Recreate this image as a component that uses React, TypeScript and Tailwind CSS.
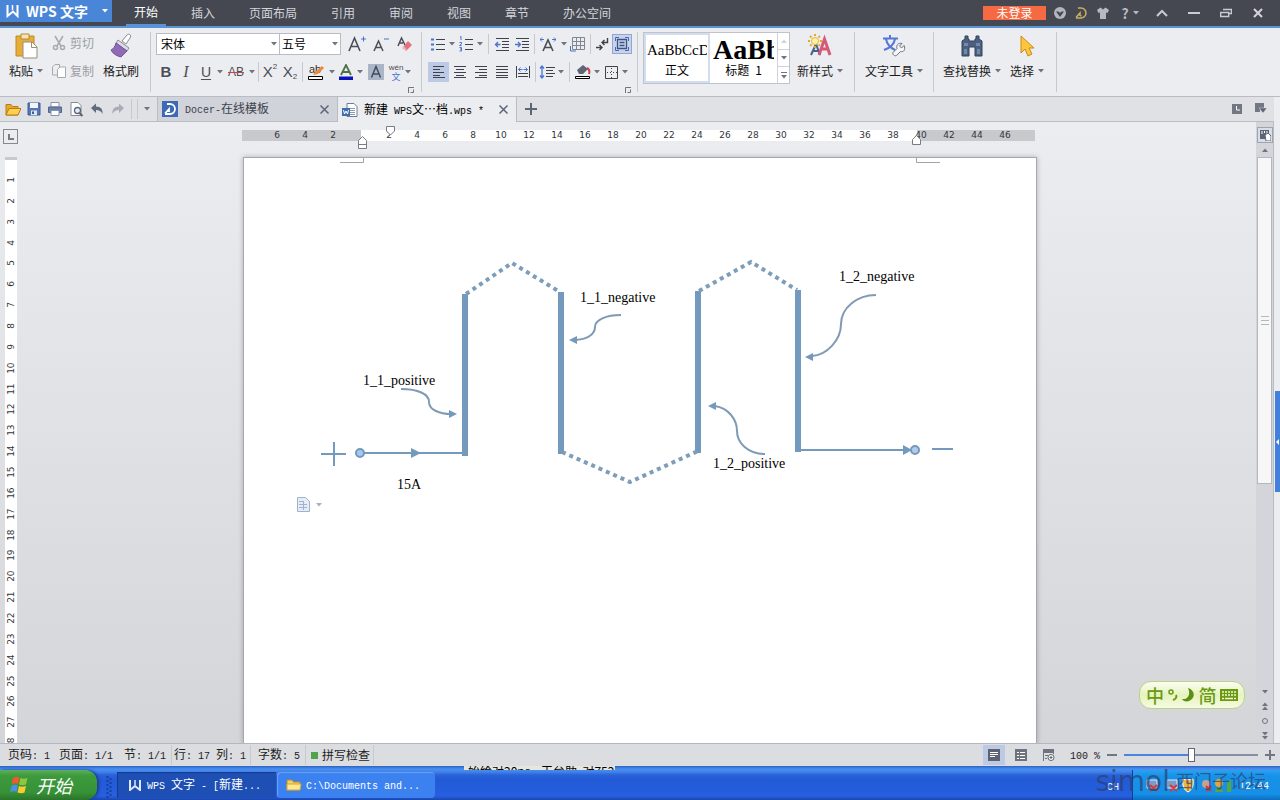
import { ReactNode, useState } from "react"
import clsx from "clsx"

type WithChildren = { children?: ReactNode }

// half-width text of the interface font
const Mono = ({ children }: WithChildren) => (
  <span className="whitespace-pre font-['Liberation_Mono',monospace] text-[10px]">{children}</span>
)

const Icon = ({ w = 16, h = 16, children }: WithChildren & { w?: number, h?: number }) => (
  <svg width={w} height={h} viewBox={`0 0 ${w} ${h}`} fill="none" className="shrink-0" aria-hidden="true">
    {children}
  </svg>
)

const Caret = ({ color = "text-[#6f7480]", className }: { color?: string, className?: string }) => (
  <svg width="6" height="4" viewBox="0 0 6 4" className={clsx("shrink-0", color, className)} aria-hidden="true">
    <path d="M0 0h6L3 3.6z" fill="currentColor" />
  </svg>
)

const Tool = ({ label, className = "w-5", children }: WithChildren & { label: string, className?: string }) => (
  <button aria-label={label} title={label} className={clsx("flex h-5 shrink-0 items-center justify-center hover:bg-[#d5def0]", className)}>
    {children}
  </button>
)

const More = ({ label }: { label: string }) => (
  <Tool label={label} className="w-2"><Caret /></Tool>
)

const Sep = ({ className = "w-1" }: { className?: string }) => (
  <span className={clsx("flex h-5 shrink-0 justify-center", className)}>
    <span className="w-px bg-[#c6c9ce]" />
  </span>
)

const GroupLine = () => <span className="h-[60px] w-px shrink-0 bg-[#c6c9ce]" />

const Launcher = () => (
  <button aria-label="对话框" className="h-2 w-2 shrink-0">
    <Icon w={6} h={6}>
      <path d="M.5 6V.5H6M2.5 5.500h3v-3" stroke="#6f7480" />
    </Icon>
  </button>
)

const BigButton = ({ label, icon, className, arrow = true }: { label: string, icon: ReactNode, className: string, arrow?: boolean }) => (
  <button className={clsx("flex shrink-0 flex-col items-center gap-[2px] text-xs leading-5 text-[#1c1c1c]", className)}>
    <span className="flex h-[26px] items-center">{icon}</span>
    <span className="flex items-center gap-1 whitespace-nowrap">{label}{arrow && <Caret />}</span>
  </button>
)

const menus = [
  { label: "插入", width: "w-[58px]" },
  { label: "页面布局", width: "w-[82px]" },
  { label: "引用", width: "w-[58px]" },
  { label: "审阅", width: "w-[58px]" },
  { label: "视图", width: "w-[58px]" },
  { label: "章节", width: "w-[58px]" },
  { label: "办公空间", width: "w-[82px]" },
]

const TitleBar = () => (
  <header className="flex h-7 shrink-0 border-b-2 border-[#5b94d6] bg-[#454850]">
    <button className="flex h-[22px] w-28 shrink-0 items-center bg-[#4a86d8] pl-[6px] text-sm font-bold text-white">
      <Icon w={14} h={14}>
        <path d="M1.500 1v11L7 7.500l4.500 4.500V1" stroke="#fff" strokeWidth="2" />
        <path d="M6.500 1v5" stroke="#fff" strokeWidth="1.500" />
      </Icon>
      <span className="ml-[6px] whitespace-nowrap">WPS 文字</span>
      <Caret className="ml-auto mr-1" color="text-white" />
    </button>
    <nav className="flex text-xs text-[#d3d6dc]">
      <a href="#start" className="ml-[14px] mr-2 flex w-10 items-center justify-center border-b-2 border-[#5b94d6] text-white">开始</a>
      {menus.map(({ label, width }) => (
        <a key={label} href={`#${label}`} className={clsx("flex items-center justify-center", width)}>{label}</a>
      ))}
    </nav>
    <div className="ml-auto flex items-center pr-[6px] text-[#b6b9c0]">
      <button className="mr-1 h-[14px] w-[63px] bg-[#f56a42] text-xs leading-[14px] text-white">未登录</button>
      <Tool label="云" className="w-5">
        <Icon w={14} h={14}><circle cx="7" cy="7" r="6" fill="#b3b6bd" /><path d="M3 5.500h8L7 11z" fill="#454850" /><path d="M5 4.500h4L7 7z" fill="#b3b6bd" /></Icon>
      </Tool>
      <Tool label="Docer" className="w-[22px]">
        <Icon w={14} h={14}><path d="M4 2h3a5 5 0 0 1 0 10H2M2 11.500 6 7v3M6.500 10h1" stroke="#c9b161" strokeWidth="1.500" /></Icon>
      </Tool>
      <Tool label="皮肤" className="w-[22px]">
        <Icon w={14} h={14}><path d="M4.500 1.500 1 4l1.500 3L4 6.500V13h6V6.500l1.500.5L13 4 9.500 1.500 7 3.500z" fill="#b6b9c0" /></Icon>
      </Tool>
      <Tool label="帮助" className="w-8 gap-1 text-sm font-bold"><span>?</span><Caret color="text-[#b6b9c0]" /></Tool>
      <Tool label="收起" className="w-8"><Icon w={12} h={8}><path d="m1 7 5-5 5 5" stroke="#c9ccd2" strokeWidth="2" /></Icon></Tool>
      <Tool label="最小化" className="w-8"><Icon w={12} h={4}><path d="M0 2h12" stroke="#c9ccd2" strokeWidth="2" /></Icon></Tool>
      <Tool label="还原" className="w-8"><Icon w={12} h={10}><path d="M3 1.500h8.500v4H9M.7 4.500h8v4h-8z" stroke="#c9ccd2" strokeWidth="1.400" /></Icon></Tool>
      <Tool label="关闭" className="w-8"><Icon w={10} h={10}><path d="m1 1 8 8m0-8L1 9" stroke="#d4d6db" strokeWidth="2" /></Icon></Tool>
    </div>
  </header>
)

const ClipboardGroup = () => (
  <div className="flex h-full w-[150px] shrink-0 pl-1 pt-[5px]">
    <BigButton label="粘贴" className="w-[44px]" icon={
      <Icon w={24} h={26}>
        <path d="M2 3h18v20H2z" fill="#e6ad3a" stroke="#c08a1f" />
        <path d="M7 1h8v5H7z" fill="#f8e6b4" stroke="#b08a35" />
        <path d="M9 9h9l5 5v11H9z" fill="#fff" stroke="#9a8e74" /><path d="M17.500 9v5.500H23" stroke="#9a8e74" />
      </Icon>
    } />
    <div className="flex w-[52px] flex-col gap-2 pl-1 text-xs text-[#9b9ea4]">
      <button className="flex h-5 items-center gap-1 whitespace-nowrap">
        <Icon w={14} h={16}><path d="M3 1l6 10M11 1 5 11" stroke="#a6a9af" strokeWidth="1.500" /><circle cx="3.500" cy="12.500" r="2" stroke="#a6a9af" strokeWidth="1.500" /><circle cx="10.500" cy="12.500" r="2" stroke="#a6a9af" strokeWidth="1.500" /></Icon>
        剪切
      </button>
      <button className="flex h-5 items-center gap-1 whitespace-nowrap">
        <Icon w={14} h={16}><path d="M5 12H.5V4L3 1.500h4.500V4" stroke="#a6a9af" /><path d="M5.500 6.500 8 4h5.500v10.500h-8z" fill="#fff" stroke="#a6a9af" /></Icon>
        复制
      </button>
    </div>
    <BigButton label="格式刷" arrow={false} className="w-[42px]" icon={
      <Icon w={24} h={26}>
        <path d="m13 8 5-6c2-2 5 0 3 3l-4 6z" fill="#fff" stroke="#8a8a99" />
        <path d="m9 7 11 8-2 3L7 10z" fill="#dddde8" stroke="#8a8a99" />
        <path d="m7 10 11 8-6 6c-4-1-8-3-10-7 2-1 4-3 5-7z" fill="#8f6bb5" stroke="#75519e" />
      </Icon>
    } />
  </div>
)

const FontGroup = () => (
  <div className="flex h-full w-[270px] shrink-0 flex-col pl-[5px] pt-[5px] text-[#4b4e56]">
    <div className="flex h-[22px] items-center">
      <div className="relative flex h-[22px] w-[124px] border border-[#b9bcc3] bg-white">
        <select aria-label="字体" className="w-full appearance-none bg-transparent pl-1 text-xs text-black outline-none"><option>宋体</option></select>
        <span className="pointer-events-none absolute right-0 top-2 w-2"><Caret /></span>
      </div>
      <div className="relative flex h-[22px] w-[61px] border border-l-0 border-[#b9bcc3] bg-white">
        <select aria-label="字号" className="w-full appearance-none bg-transparent pl-[2px] text-xs text-black outline-none"><option>五号</option></select>
        <span className="pointer-events-none absolute right-0 top-2 w-2"><Caret /></span>
      </div>
      <Tool label="增大字号" className="ml-1 w-6">
        <Icon w={18} h={18}><path d="m1 16 5.500-13L12 16M3 11.500h7" stroke="#4b4e56" strokeWidth="1.600" /><path d="M13 4h5M15.500 1.500v5" stroke="#4a72cf" /></Icon>
      </Tool>
      <Tool label="减小字号" className="w-6">
        <Icon w={18} h={18}><path d="m2 16 4.500-10L11 16M4 12.500h5" stroke="#4b4e56" strokeWidth="1.500" /><path d="M12 4h5" stroke="#4a72cf" /></Icon>
      </Tool>
      <Tool label="清除格式" className="w-6">
        <Icon w={16} h={16}><path d="m1 10 3.500-8L8 9M2 7h4" stroke="#4b4e56" strokeWidth="1.500" /><path d="m6 11 5-6 4 4-6 6z" fill="#e4717c" /><path d="m5 12 2-2 3 4-1 1z" fill="#f4b2b8" /></Icon>
      </Tool>
    </div>
    <div className="mt-[7px] flex items-center font-['Liberation_Sans',sans-serif] text-[15px] leading-5">
      <Tool label="加粗"><b>B</b></Tool>
      <Tool label="倾斜"><i className="font-['Liberation_Serif',serif] text-base">I</i></Tool>
      <Tool label="下划线"><u className="text-sm underline-offset-2">U</u></Tool>
      <More label="下划线类型" />
      <Tool label="删除线" className="w-6"><s className="text-xs decoration-[#c9434b]">AB</s></Tool>
      <More label="删除线类型" />
      <Sep />
      <Tool label="上标"><span>X</span><span className="self-start text-[8px] leading-[10px]">2</span></Tool>
      <Tool label="下标"><span>X</span><span className="self-end text-[8px] leading-[10px]">2</span></Tool>
      <Sep />
      <Tool label="突出显示" className="w-6">
        <Icon w={16} h={16}><text x="1" y="9" fontSize="11" fill="#333">ab</text><path d="m5 11 2-3 7-6 2 2-6 6z" fill="#ee8a35" /><path d="M.5 12.500h14v3H.5z" fill="#fff" stroke="#000" /></Icon>
      </Tool>
      <More label="突出显示颜色" />
      <Tool label="字体颜色">
        <Icon w={16} h={16}><path d="M3 11 8 1l5 10M5 8h6" stroke="#4e7245" strokeWidth="1.800" /><path d="M1 12.500h14V16H1z" fill="#0a14b8" /></Icon>
      </Tool>
      <More label="字体颜色" />
      <Tool label="字符底纹" className="w-6">
        <Icon w={16} h={16}><path d="M0 0h16v16H0z" fill="#a9b6ca" /><path d="m3.500 13.500 4.500-11 4.500 11M5 10h6" stroke="#454b58" strokeWidth="1.500" /></Icon>
      </Tool>
      <Tool label="拼音指南" className="w-4">
        <span className="flex flex-col items-center text-[9px] leading-[9px]">
          <span className="text-[8px]">wén</span>
          <span className="font-['Noto_Sans_CJK_SC',sans-serif] text-[#4a72cf]">文</span>
        </span>
      </Tool>
      <More label="拼音指南选项" />
    </div>
    <div className="mt-1 flex justify-end pr-[5px]"><Launcher /></div>
  </div>
)

const Lines = ({ x, color = "#3f424a" }: { x: number[][], color?: string }) => (
  <path d={x.map(([from, to, y]) => `M${from} ${y + 0.5}H${to}`).join("")} stroke={color} />
)

const ParagraphGroup = () => (
  <div className="flex h-full w-[215px] shrink-0 flex-col pl-[6px] pt-[6px]">
    <div className="flex items-center">
      <Tool label="项目符号"><Icon><Lines x={[[6, 15, 3], [6, 15, 8], [6, 15, 13]]} /><path d="M1 2.500h3v2H1zM1 7.500h3v2H1zM1 12.500h3v2H1z" fill="#4a72cf" /></Icon></Tool>
      <More label="项目符号库" />
      <Tool label="编号"><Icon><Lines x={[[7, 15, 3], [7, 15, 8], [7, 15, 13]]} /><path d="M2 1l1-.5V4M1.500 6.500h2v1.500l-2 1.500h2M1.500 11.500h2v3.500h-2M2 13h1.500" stroke="#4a72cf" /></Icon></Tool>
      <More label="编号库" />
      <Sep className="w-2" />
      <Tool label="减少缩进"><Icon><Lines x={[[2, 15, 2], [8, 15, 5], [8, 15, 8], [8, 15, 11], [2, 15, 14]]} /><path d="M6.500 8.500H2M4 6 1.500 8.500 4 11" stroke="#4a72cf" strokeWidth="1.300" /></Icon></Tool>
      <Tool label="增加缩进"><Icon><Lines x={[[2, 15, 2], [8, 15, 5], [8, 15, 8], [8, 15, 11], [2, 15, 14]]} /><path d="M1 8.500h5M4 6l2.500 2.500L4 11" stroke="#4a72cf" strokeWidth="1.300" /></Icon></Tool>
      <Sep />
      <Tool label="字符缩放" className="w-6"><Icon><path d="m3 15 5-11 5 11M5 11.500h6" stroke="#4b4e56" strokeWidth="1.600" /><path d="M0 3.500h4M2 1.500l-2 2 2 2M12 3.500h4m-2-2 2 2-2 2" stroke="#4a72cf" /></Icon></Tool>
      <More label="缩放选项" />
      <Tool label="网格"><Icon><path d="M2.500 1.500h12v12h-12zM2.500 5.500h12M2.500 9.500h12M6.500 1.500v12M10.500 1.500v12" stroke="#7f8694" /><path d="M.5 10v5H6" stroke="#4a72cf" /></Icon></Tool>
      <Sep />
      <Tool label="换行符"><Icon><path d="M13.500 2v4.500H8M10.500 4 8 6.500 10.500 9" stroke="#3f424a" strokeWidth="1.400" /><path d="M2 11.500h6M5.500 9 8 11.500 5.500 14" stroke="#3f424a" strokeWidth="1.400" /></Icon></Tool>
      <Tool label="段落布局" className="w-5 border border-[#8fa8d3] bg-[#c6d3ea]"><Icon><path d="M1.500 5V1.500H5M11 1.500h3.500V5M14.500 11v3.500H11M5 14.500H1.500V11" stroke="#4a66a8" /><path d="M3.500 3.500h9v9h-9zM5.500 6.500h5M5.500 9.500h5" stroke="#3c5288" strokeWidth="1.300" /></Icon></Tool>
    </div>
    <div className="mt-2 flex items-center">
      <Tool label="左对齐" className="w-[21px] bg-[#bccae6]"><Icon><Lines x={[[2, 13, 2], [2, 9, 5], [2, 13, 8], [2, 9, 11], [2, 14, 13]]} /></Icon></Tool>
      <Tool label="居中" className="w-[21px]"><Icon><Lines x={[[2, 14, 2], [4, 12, 5], [2, 14, 8], [4, 12, 11], [2, 14, 13]]} /></Icon></Tool>
      <Tool label="右对齐" className="w-[21px]"><Icon><Lines x={[[2, 14, 2], [6, 14, 5], [2, 14, 8], [6, 14, 11], [2, 14, 13]]} /></Icon></Tool>
      <Tool label="两端对齐" className="w-[21px]"><Icon><Lines x={[[2, 14, 2], [2, 14, 5], [2, 14, 8], [2, 14, 11], [2, 14, 13]]} /></Icon></Tool>
      <Tool label="分散对齐" className="w-[21px]"><Icon><path d="M1.500 2v12M14.500 2v12" stroke="#3f424a" /><path d="M3.500 5.500h4M5.500 3.500l-2 2 2 2M8.500 5.500h4m-2-2 2 2-2 2" stroke="#4a72cf" /><Lines x={[[3, 13, 9], [3, 13, 12]]} /></Icon></Tool>
      <Sep />
      <Tool label="行距"><Icon><Lines x={[[7, 16, 3], [7, 14, 6], [7, 16, 9], [7, 14, 12]]} /><path d="M3 2v12M1 4.500 3 2l2 2.500M1 11.500 3 14l2-2.500" stroke="#4a72cf" strokeWidth="1.300" /></Icon></Tool>
      <More label="行距选项" />
      <Sep className="w-2" />
      <Tool label="底纹"><Icon><path d="m2 6 6-5 5 4-5 5H4z" fill="#5e6673" /><path d="M12 4c2 1 3 3 2 6" stroke="#cc4450" strokeWidth="2" /><path d="M.5 12.500h14v2H.5z" fill="#fff" stroke="#000" /></Icon></Tool>
      <More label="底纹颜色" />
      <Tool label="边框"><Icon><path d="M2.500 2.500h12v12h-12z" stroke="#3f424a" /><path d="M8.500 4v10M4 8.500h10" stroke="#3f424a" strokeDasharray="1 2" /></Icon></Tool>
      <More label="边框类型" />
    </div>
    <div className="mt-1 flex justify-end pr-1"><Launcher /></div>
  </div>
)

const StylesGroup = () => (
  <div className="flex h-full w-[216px] shrink-0 pl-[5px] pt-1">
    <div className="flex h-[52px] w-[147px] border border-[#bfc3ca] bg-white">
      <button className="flex h-[50px] w-[66px] flex-col items-center overflow-hidden border-2 border-[#d3ddf0] px-px pt-[3px]">
        <span className="w-full overflow-hidden whitespace-nowrap text-left font-['Liberation_Serif',serif] text-[15px] leading-6 text-black">AaBbCcDd</span>
        <span className="text-xs leading-4">正文</span>
      </button>
      <button className="flex h-[50px] w-[67px] flex-col items-center overflow-hidden px-[3px] pt-[5px]">
        <span className="w-full overflow-hidden whitespace-nowrap text-left font-['Liberation_Serif',serif] text-[28px] font-bold leading-6 text-black">AaBb</span>
        <span className="text-xs leading-4">标题<Mono> </Mono>1</span>
      </button>
      <div className="flex w-3 flex-col divide-y divide-[#cfd2d8] border-l border-[#cfd2d8]">
        <button aria-label="上一行" className="flex flex-1 items-center justify-center"><Caret className="rotate-180" color="text-[#d0d3d8]" /></button>
        <button aria-label="下一行" className="flex flex-1 items-center justify-center"><Caret /></button>
        <button aria-label="更多样式" className="flex flex-1 flex-col items-center justify-center gap-[2px]"><span className="h-px w-[6px] bg-[#6f7480]" /><Caret /></button>
      </div>
    </div>
    <div className="flex flex-1 flex-col items-end pr-1 pt-px">
      <BigButton label="新样式" className="w-[60px]" icon={
        <Icon w={24} h={24}>
          <path d="m3 21 5-11 4 11M5 17h6" stroke="#44618f" strokeWidth="2" />
          <path d="m11 21 5.500-16L22 21M13 15h7" stroke="#d45a77" strokeWidth="3" />
          <path d="M7 0v14M0 7h14M2 2l10 10M12 2 2 12" stroke="#e2a834" strokeWidth="2" strokeDasharray="2 1" />
          <circle cx="7" cy="7" r="3.500" fill="#fff0a8" stroke="#e8bd45" />
        </Icon>
      } />
      <div className="mt-[6px]"><Launcher /></div>
    </div>
  </div>
)

const Ribbon = () => (
  <section className="flex h-[69px] shrink-0 items-center overflow-hidden border-b border-[#b9bcc3] bg-[#ebedf0]">
    <ClipboardGroup /><GroupLine />
    <FontGroup /><GroupLine />
    <ParagraphGroup /><GroupLine />
    <StylesGroup /><GroupLine />
    <div className="flex h-full w-[78px] shrink-0 justify-center pt-[5px]">
      <BigButton label="文字工具" className="w-[72px]" icon={
        <Icon w={24} h={24}>
          <path d="M1 4.500h15M8 1v3M4 5c1 6 5 9 9 11M13 5c-1 6-5 9-11 11" stroke="#5577d6" strokeWidth="2" />
          <path d="M22 11.500 19.500 14l-2-2L20 9.500c-4-1-6 2-5 5l-4 4c-1 2 2 4 3.500 3l4-4c3 1 5.500-2 3.500-6z" fill="#f4f5f7" stroke="#6b6e76" />
        </Icon>
      } />
    </div>
    <GroupLine />
    <div className="flex h-full w-[122px] shrink-0 pl-[5px] pt-[5px]">
      <BigButton label="查找替换" className="w-[66px]" icon={
        <Icon w={22} h={22}>
          <path d="M4 4V1h3v3h1v2h6V4h1V1h3v3l3 2v15h-7v-9H8v9H1V6z" fill="#4c607f" stroke="#33435c" />
          <path d="M3 8h4v3H3zM15 8h4v3h-4zM3 14h3v5H3zM16 14h3v5h-3z" fill="#7289ac" />
        </Icon>
      } />
      <BigButton label="选择" className="w-[44px]" icon={
        <Icon w={16} h={22}><path d="M2 1v17l4-4 3 7 4-2-3-6h5z" fill="#ffc63c" stroke="#c98a1d" /></Icon>
      } />
    </div>
    <GroupLine />
  </section>
)

const CloseX = ({ label }: { label: string }) => (
  <button aria-label={label} className="ml-auto mr-2 shrink-0">
    <Icon w={9} h={9}><path d="m.5.5 8 8m0-8-8 8" stroke="#5d6678" strokeWidth="1.500" /></Icon>
  </button>
)

const TabBar = () => (
  <div className="flex h-[25px] shrink-0 border-b border-[#b9bcc3] bg-[#dfe1e5]">
    <div className="flex w-[157px] shrink-0 items-center pl-[2px]">
      <Tool label="打开" className="w-[21px]"><Icon><path d="M1 3.500h5l1.500 2H13V14H1z" fill="#e7a92b" stroke="#b67d14" /><path d="M4 7.500h12L13 14H1z" fill="#ffd04d" stroke="#b67d14" /></Icon></Tool>
      <Tool label="保存" className="w-[21px]"><Icon><path d="M2 2h12v12H2z" fill="#5577b4" stroke="#3c5c98" /><path d="M4 2h8v5H4z" fill="#f2f5fa" /><path d="M5 9.500h6V14H5z" fill="#dfe5f0" /><path d="M6 10.500h2V13H6z" fill="#3c5c98" /></Icon></Tool>
      <Tool label="打印" className="w-[21px]"><Icon><path d="M4 1.500h8V6H4z" fill="#fff" stroke="#8794ad" /><path d="M1.500 6h13v5.500h-13z" fill="#6e82a8" stroke="#526892" /><path d="M4 9.500h8v5H4z" fill="#fff" stroke="#8794ad" /></Icon></Tool>
      <Tool label="打印预览" className="w-[21px]"><Icon><path d="M3 1.500h7l3 3v10H3z" fill="#fff" stroke="#868b95" /><circle cx="9.500" cy="9.500" r="3" fill="#e4ecf8" stroke="#5c6678" strokeWidth="1.300" /><path d="m11.500 12 3 3" stroke="#5c6678" strokeWidth="2" /></Icon></Tool>
      <Tool label="撤消" className="w-[21px]"><Icon><path d="M2 7 7 2.500v3c5 0 7 3 6.500 7.500C12 10 10 9 7 9v3z" fill="#626c80" /></Icon></Tool>
      <Tool label="恢复" className="w-[21px]"><Icon><path d="M14 7 9 2.500v3c-5 0-7 3-6.500 7.500C4 10 6 9 9 9v3z" fill="#a9adb5" /></Icon></Tool>
      <Sep className="w-[6px]" /><Sep className="w-[6px]" />
      <Tool label="自定义" className="w-[14px]"><Caret /></Tool>
    </div>
    <div className="flex w-[181px] shrink-0 items-center border-x border-[#b9bcc3] bg-[#d0d3da] pl-1 text-xs text-[#3f424a]">
      <Icon><path d="M0 0h16v16H0z" fill="#3f69b5" /><path d="M5 3h3a5 5 0 0 1 0 10H3M3 12.500 7 8v3" stroke="#fff" strokeWidth="1.800" /></Icon>
      <span className="ml-[7px] whitespace-nowrap"><Mono>Docer-</Mono>在线模板</span>
      <CloseX label="关闭 Docer" />
    </div>
    <div className="-mb-px flex w-[179px] shrink-0 items-center border-r border-[#b9bcc3] bg-[#ebedf0] pl-1 text-xs text-black">
      <Icon><path d="M5 1.500h7l3 3v10H5z" fill="#fff" stroke="#6e7d96" /><path d="M7 6.500h6M7 8.500h6M7 10.500h6M7 12.500h6" stroke="#8b99b0" /><path d="M0 6h8v8H0z" fill="#3f6cab" /><path d="m1.500 8 1 4L4 9l1.500 3 1-4" stroke="#fff" /></Icon>
      <span className="ml-[6px] whitespace-nowrap">新建<Mono> WPS</Mono>文…档<Mono>.wps *</Mono></span>
      <CloseX label="关闭文档" />
    </div>
    <button aria-label="新建标签" className="flex w-7 items-center justify-center">
      <Icon w={12} h={12}><path d="M6 0v12M0 6h12" stroke="#5d6678" strokeWidth="2" /></Icon>
    </button>
    <div className="ml-auto flex items-center gap-1 pr-[3px]">
      <Tool label="历史"><Icon w={10} h={10}><path d="M0 0h10v10H0z" fill="#737783" /><path d="M4.500 2v4H8" stroke="#fff" /></Icon></Tool>
      <Tool label="标签列表"><Icon w={12} h={12}><path d="M0 0h9v5H5v4H0z" fill="#737783" /><path d="M4 5h8l-4 5z" fill="#5d6170" stroke="#dfe1e5" strokeWidth=".5" /></Icon></Tool>
    </div>
  </div>
)

// -6 ... 46 in steps of two characters, the zero mark stays blank
const rulerMarks = Array.from({ length: 27 }, (_, i) => (i - 3) * 2)
const sideMarks = Array.from({ length: 28 }, (_, i) => i + 1)

const HorizontalRuler = () => (
  <div className="relative flex h-[11px] w-[796px] shrink-0 bg-[linear-gradient(90deg,#c8c9cd_119px,#fff_119px,#fff_675px,#c8c9cd_675px,#c8c9cd_793px,transparent_793px)] pl-[21px] font-['DejaVu_Sans',sans-serif] text-[9px] leading-[11px] text-[#33353a]">
    {rulerMarks.map((n) => (
      <span key={n} className="w-7 shrink-0 text-center">{n === 0 ? "" : Math.abs(n)}</span>
    ))}
    <svg width="9" height="10" viewBox="0 0 9 10" className="absolute -top-[4px] left-[144px]" aria-hidden="true"><path d="M.5.5h8V5l-4 4-4-4z" fill="#fff" stroke="#777b84" /></svg>
    <svg width="9" height="13" viewBox="0 0 9 13" className="absolute left-[116px] top-[6px]" aria-hidden="true"><path d="M.5 12.500V4.500l4-4 4 4v8zM.5 8.500h8" fill="#fff" stroke="#777b84" /></svg>
    <svg width="9" height="10" viewBox="0 0 9 10" className="absolute left-[670px] top-[5px]" aria-hidden="true"><path d="M.5 9.500v-5l4-4 4 4v5z" fill="#fff" stroke="#777b84" /></svg>
  </div>
)

const Circuit = () => (
  <svg width="792" height="400" viewBox="0 0 792 400" fill="none" stroke="#7399bc" role="img" aria-label="15A">
    <path d="M96 4.500h23.500V0M696 4.500h-23.500V0" stroke="#a0a4ab" />
    <path d="M221 136v162M317 134v162M454 133v162M554 132v162" strokeWidth="6" />
    <path d="M222 136 268 105l48 29M455 133l52-29 46 28M318 294l68 30 68-31" strokeWidth="4" strokeDasharray="4 4" stroke="#7d9dbb" />
    <path d="M77 296h25M90 284v24M116 295h103M556 292h106M688 291h21" strokeWidth="2" />
    <path d="M167 290v10l10-5zM659 287v10l9-5z" fill="#7399bc" stroke="none" />
    <circle cx="116" cy="295" r="4" fill="#a6c8ee" strokeWidth="2" />
    <circle cx="671" cy="292" r="4" fill="#b4cbe8" strokeWidth="2" />
    <g stroke="#7f9ab5" strokeWidth="2">
      <path d="M157 231c17 0 28 5 28 13s11 12 22 12" />
      <path d="M377 157c-15 0-26 5-26 12s-7 12-19 13" />
      <path d="M632 137c-19 0-35 13-35 29s-14 31-29 32" />
      <path d="M521 296c-17 0-28-11-28-23s-9-23-22-25" />
    </g>
    <path d="M213 256l-8-4v8zM325 182l8-4v8zM561 199l8-4v8zM464 248l8-4v8z" fill="#7399bc" stroke="none" />
    <g stroke="none" fill="#000" className="font-['Liberation_Serif',serif] text-sm">
      <text x="119" y="227">1_1_positive</text>
      <text x="336" y="144">1_1_negative</text>
      <text x="595" y="123">1_2_negative</text>
      <text x="469" y="310">1_2_positive</text>
      <text x="153" y="331">15A</text>
    </g>
    <path d="M53.500 339.500h8l4 4v10h-12z" fill="#e4edf7" stroke="#9fb3cc" />
    <path d="M55 343.500h5M55 346.500h8M55 349.500h8M59.500 344v8" stroke="#9fb3cc" />
    <path d="M72 345h6l-3 3.500z" fill="#a9b1bf" stroke="none" />
  </svg>
)

const VerticalRuler = () => (
  <div className="flex w-6 shrink-0 flex-col pl-1 pt-[7px]">
    <button aria-label="制表位" className="-ml-px flex h-[15px] w-[15px] shrink-0 items-center justify-center border border-[#85888f]">
      <Icon w={6} h={6}><path d="M1 0v5h5" stroke="#777b84" strokeWidth="2" /></Icon>
    </button>
    <div className="ml-px mt-[13px] h-[3px] w-3 shrink-0 bg-[#c8c9cd]" />
    <div className="ml-px flex h-[594px] w-3 shrink-0 flex-col bg-white pt-[10px] font-['DejaVu_Sans',sans-serif] text-[9px] leading-3 text-[#33353a]">
      {sideMarks.map((n) => (
        <span key={n} className="flex w-3 flex-1 rotate-180 items-center justify-center [writing-mode:vertical-rl]">{n}</span>
      ))}
    </div>
  </div>
)

const ScrollBar = () => (
  <div className="flex w-[18px] shrink-0 flex-col items-center border-r border-[#b9bcc3] bg-[#d3d5da] pt-[5px]">
    <button aria-label="标尺" className="flex h-4 w-4 shrink-0 items-center justify-center border border-[#9fa3ab] bg-[#d6deeb]">
      <Icon w={12} h={12}><path d="M1 1h9v9H1z" fill="#5f6472" /><path d="M3 2v3M5.500 2v2M8 2v3" stroke="#fff" /><path d="m6 6 3-2 3 3v5H7z" fill="#fff" stroke="#5f6472" /></Icon>
    </button>
    <button aria-label="向上" className="flex h-[14px] shrink-0 items-center"><Caret className="rotate-180" /></button>
    <div className="flex h-[327px] w-[15px] shrink-0 flex-col items-center justify-center gap-[3px] border border-[#b4b7be] bg-[#f7f7f8]">
      <span className="h-px w-2 bg-[#b4b7be]" /><span className="h-px w-2 bg-[#b4b7be]" /><span className="h-px w-2 bg-[#b4b7be]" />
    </div>
    <div className="mt-auto flex flex-col items-center">
      <button aria-label="向下" className="flex h-[14px] items-center"><Caret /></button>
      <button aria-label="上一页" className="flex h-[14px] flex-col items-center justify-center"><Caret className="rotate-180" /><Caret className="rotate-180" /></button>
      <button aria-label="选择浏览对象" className="flex h-[15px] items-center"><span className="h-[6px] w-[6px] rounded-full border border-[#6f7480]" /></button>
      <button aria-label="下一页" className="flex h-[15px] flex-col items-center justify-center"><Caret /><Caret /></button>
    </div>
  </div>
)

const Workspace = () => (
  <main className="flex min-h-0 flex-1 overflow-hidden bg-gradient-to-b from-[#ebedf0] to-[#d4d5d9]">
    <VerticalRuler />
    <div className="flex min-w-0 flex-1 flex-col items-center pt-2">
      <HorizontalRuler />
      <div className="mt-4 w-[794px] flex-1 border border-b-0 border-[#a6a8ad] bg-white shadow-[0_0_5px_rgba(0,0,0,0.25)]">
        <Circuit />
      </div>
    </div>
    <ScrollBar />
  </main>
)

const InputMethodBar = () => (
  <div className="absolute bottom-[91px] right-[35px] flex h-7 w-[106px] items-center justify-between rounded-xl border border-[#b9d48a] bg-gradient-to-b from-[#fbfdf0] via-[#e6f3bd] to-[#f5fbe2] px-[6px] text-lg font-medium leading-none text-[#6a9a12]">
    <span>中</span>
    <Icon w={10} h={14}><circle cx="3" cy="4" r="2" stroke="#6a9a12" strokeWidth="1.500" /><path d="M8 7c1 2 0 4-3 5" stroke="#6a9a12" strokeWidth="2" /></Icon>
    <Icon w={14} h={16}><path d="M7 1c7 2 8 10 1 13-3 1-6 0-7-2 6 1 9-5 6-11z" fill="#5e8f12" /></Icon>
    <span>简</span>
    <Icon w={18} h={14}><path d="M0 1h18v12H0z" fill="#6a9a12" /><path d="M2 4h14M2 7h14" stroke="#f0f8d4" strokeWidth="1.500" strokeDasharray="2 1" /><path d="M2 10.500h2M5 10.500h8M14 10.500h2" stroke="#f0f8d4" strokeWidth="1.500" /></Icon>
  </div>
)

const StatusBar = () => {
  const [zoom, setZoom] = useState(50)

  return (
    <footer className="flex h-[23px] shrink-0 items-center border-t border-[#b4b7be] bg-[#dcdde1] text-xs text-[#1c1c1c]">
      <div className="flex items-center whitespace-nowrap pl-2">
        <span className="w-[51px]">页码<Mono>: 1</Mono></span>
        <span className="w-[65px]">页面<Mono>: 1/1</Mono></span>
        <span className="w-[45px]">节<Mono>: 1/1</Mono></span>
        <Sep />
        <span className="w-[43px] pl-px">行<Mono>: 17</Mono></span>
        <span className="w-[32px]">列<Mono>: 1</Mono></span>
        <Sep />
        <span className="w-[51px] pl-[6px]">字数<Mono>: 5</Mono></span>
        <Sep />
        <span className="mx-1 h-[7px] w-[7px] bg-[#4fa34a]" />
        <span className="w-[49px]">拼写检查</span>
        <Sep />
      </div>
      <div className="ml-auto flex items-center pr-1">
        <Tool label="页面视图" className="w-[22px] bg-[#bccae6]"><Icon w={12} h={12}><path d="M0 0h12v12H0z" fill="#5d6170" /><path d="M2 3.500h8M2 5.500h8M2 7.500h5" stroke="#fff" /></Icon></Tool>
        <Tool label="大纲视图" className="ml-[5px] w-[22px]"><Icon w={12} h={12}><path d="M0 0h12v12H0z" fill="#6f7380" /><path d="M2 3.500h2M5 3.500h5M2 6.500h2M5 6.500h5M2 9.500h2M5 9.500h5" stroke="#fff" /></Icon></Tool>
        <Tool label="Web 视图" className="ml-[6px] w-[22px]"><Icon w={12} h={12}><path d="M.5 12V.5h10V5" stroke="#6f7380" /><path d="M0 0h11v4H0z" fill="#6f7380" /><path d="M2 6.500h3M2 9.500h2" stroke="#6f7380" /><circle cx="8" cy="8.500" r="3" fill="#fff" stroke="#5d6170" /><path d="M6.500 8.500h3M8 7v3" stroke="#5d6170" /></Icon></Tool>
        <span className="ml-[10px] w-8"><Mono>100 %</Mono></span>
        <Tool label="缩小" className="ml-1 w-3"><span className="h-[2px] w-[10px] bg-[#6f7684]" /></Tool>
        <input
          type="range"
          aria-label="显示比例"
          value={zoom}
          onChange={(e) => setZoom(Number(e.target.value))}
          className="mx-[6px] h-4 w-[134px] appearance-none bg-[linear-gradient(90deg,#4f83dc_50%,#8790a3_50%)] bg-[length:100%_2px] bg-center bg-no-repeat [&::-webkit-slider-thumb]:h-[14px] [&::-webkit-slider-thumb]:w-[7px] [&::-webkit-slider-thumb]:appearance-none [&::-webkit-slider-thumb]:border [&::-webkit-slider-thumb]:border-[#5d6678] [&::-webkit-slider-thumb]:bg-white"
        />
        <Tool label="放大" className="w-3"><Icon w={10} h={10}><path d="M5 0v10M0 5h10" stroke="#6f7684" strokeWidth="2" /></Icon></Tool>
      </div>
    </footer>
  )
}

const TaskBar = () => (
  <div className="relative flex h-[34px] shrink-0 items-end bg-[linear-gradient(180deg,#2a63c0_0,#4a8ff0_3px,#3f83ea_6px,#2a62d8_9px,#225ad6_14px,#2660e0_30px,#1b45ae_34px)] text-xs text-white">
    <div className="absolute left-[464px] top-0 h-1 w-[151px] overflow-hidden whitespace-pre bg-[#e6e6e0] pl-1 leading-[10px] text-black">
      始给对20ns    天台助  对752
    </div>
    <button className="flex h-[30px] w-[97px] shrink-0 items-center gap-[6px] rounded-r-xl bg-[linear-gradient(180deg,#5fae5a,#3c9a3c_20%,#379237_75%,#2a7429)] pl-[10px] text-lg italic leading-none shadow-[2px_0_3px_#1b3f8f]">
      <Icon w={20} h={18}>
        <path d="M3 2c2-1.500 4.500-1.500 6.500-.5L8 8c-2-1-4-1-6.500.5z" fill="#ee5a2c" />
        <path d="M10.500 2c2 1 4.500 1 7 0L16 8.500c-2 1-4 1-7 0z" fill="#8dc63f" />
        <path d="M1.500 10c2-1.500 4-1.500 6.500-.5L6.500 16c-2-1-4-1-6.500.5z" fill="#4a8fe8" />
        <path d="M9 10c2 1 4 1 7 0l-1.500 6.500c-2 1-4 1-7 0z" fill="#fccb2f" />
      </Icon>
      <span>开始</span>
    </button>
    <Icon w={20} h={30}><path d="M10.500 6v22M13.500 8v18" stroke="#17409f" strokeWidth="2" strokeDasharray="2 2" /></Icon>
    <button className="mb-[2px] flex h-[26px] w-[159px] items-center whitespace-nowrap bg-[#1e4fb4] pl-3 shadow-[inset_1px_1px_1px_#123a8c]">
      <Icon w={12} h={12}><path d="M1 1v10l5-4 5 4V1" stroke="#dfe9ff" strokeWidth="2" /><path d="M6 1v5" stroke="#dfe9ff" strokeWidth="1.500" /></Icon>
      <span className="ml-[6px]"><Mono>WPS </Mono>文字<Mono> - [</Mono>新建<Mono>...</Mono></span>
    </button>
    <button className="mb-[2px] ml-px flex h-[26px] w-[158px] items-center whitespace-nowrap rounded-sm bg-[#3c81f0] pl-[9px] shadow-[inset_1px_1px_1px_#6aa2f8]">
      <Icon><path d="M1 3h5l1.500 2H14v8H1z" fill="#f3cf62" stroke="#b98e26" /><path d="M1 7h14l-1 6H1z" fill="#ffe893" stroke="#d0a43a" /></Icon>
      <span className="ml-1"><Mono>C:\Documents and...</Mono></span>
    </button>
    <span className="mb-[6px] ml-auto mr-[13px]"><Mono>CH</Mono></span>
    <div className="flex h-[30px] w-[148px] shrink-0 items-center border-l border-[#0c3d9c] bg-[linear-gradient(180deg,#2ba2f0,#1792e8_20%,#1590e6_80%,#0e6dc0)] pl-3">
      <Icon w={92} h={16}>
        <path d="M2 3h10v8H2zM22 3h10v8H22z" fill="#7c9cc8" stroke="#e0e8f4" />
        <path d="m5 8 7 6m0-6-7 6M25 8l7 6m0-6-7 6" stroke="#d8363a" strokeWidth="2" />
        <path d="M38 2c3 1 6 1 10 0 1 7-1 11-5 13-4-2-6-6-5-13z" fill="#f0b840" stroke="#fff" />
        <path d="M43 3v11" stroke="#9c6a1a" />
        <circle cx="61" cy="7" r="4" fill="#c9a090" /><path d="m61 9 5 5m0-5-5 5" stroke="#d8363a" strokeWidth="2" />
        <circle cx="74" cy="6" r="4" fill="#e0a838" /><path d="M70 15c0-6 8-6 8 0zM82 15V6l4-4v13z" fill="#58a83c" />
      </Icon>
      <span className="ml-[2px]"><Mono>12:44</Mono></span>
    </div>
    <div className="pointer-events-none absolute bottom-[6px] right-[14px] flex items-center gap-[6px] whitespace-nowrap font-['DejaVu_Sans','Noto_Sans_CJK_SC',sans-serif] leading-6 text-[#2c3f70]/70">
      <span className="text-[28px]">simol</span>
      <span className="text-lg leading-6">西门子论坛</span>
    </div>
  </div>
)

export default function App() {
  return (
    <div className="relative flex h-screen min-h-[600px] flex-col overflow-hidden font-['Noto_Sans_CJK_SC',sans-serif]">
      <TitleBar />
      <Ribbon />
      <div className="flex min-h-0 flex-1">
        <div className="flex min-w-0 flex-1 flex-col">
          <TabBar />
          <Workspace />
        </div>
        <aside className="flex w-[6px] shrink-0 flex-col bg-[#ebedf0] pl-px pt-[294px]">
          <button aria-label="展开任务窗格" className="flex h-[101px] items-center bg-[#4380dd]">
            <svg width="4" height="6" viewBox="0 0 4 6" aria-hidden="true"><path d="M4 0v6L1 3z" fill="#fff" /></svg>
          </button>
        </aside>
      </div>
      <StatusBar />
      <TaskBar />
      <InputMethodBar />
    </div>
  )
}
